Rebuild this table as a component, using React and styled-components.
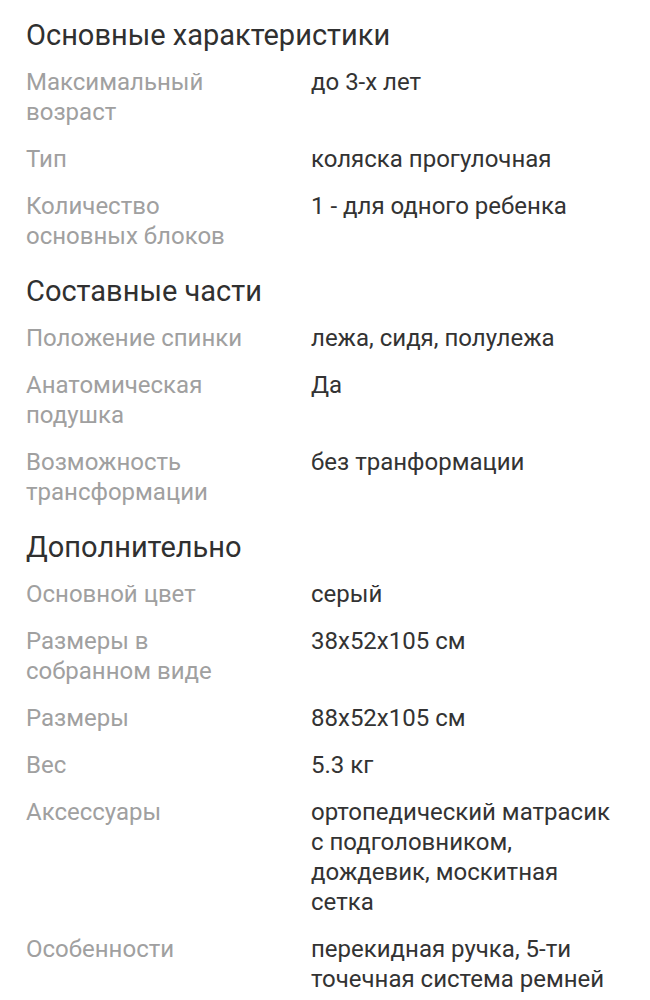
import React from 'react';
import styled, { createGlobalStyle } from 'styled-components';

const GlobalStyle = createGlobalStyle`
  body {
    margin: 0;
    background: #fff;
    font-family: Roboto, "Noto Sans", sans-serif;
  }
`;

const Page = styled.div`
  padding: 20px 26px 0;
`;

const Section = styled.section`
  display: flex;
  flex-direction: column;
  gap: 17px;
  margin-bottom: 25px;
`;

const Title = styled.h2`
  margin: 0;
  font-size: 29px;
  font-weight: 400;
  line-height: 30px;
  color: #303030;
`;

const Row = styled.div`
  display: grid;
  grid-template-columns: 285px 310px;
  font-size: 24px;
  line-height: 30px;
`;

const Label = styled.div`
  color: #a0a0a0;
  padding-right: 40px;
`;

const Value = styled.div`
  color: #333;
`;

const sections = [
  {
    title: 'Основные характеристики',
    rows: [
      ['Максимальный возраст', 'до 3-х лет'],
      ['Тип', 'коляска прогулочная'],
      ['Количество основных блоков', '1 - для одного ребенка'],
    ],
  },
  {
    title: 'Составные части',
    rows: [
      ['Положение спинки', 'лежа, сидя, полулежа'],
      ['Анатомическая подушка', 'Да'],
      ['Возможность трансформации', 'без транформации'],
    ],
  },
  {
    title: 'Дополнительно',
    rows: [
      ['Основной цвет', 'серый'],
      ['Размеры в собранном виде', '38x52x105 см'],
      ['Размеры', '88x52x105 см'],
      ['Вес', '5.3 кг'],
      ['Аксессуары', 'ортопедический матрасик с подголовником, дождевик, москитная сетка'],
      ['Особенности', 'перекидная ручка, 5-ти точечная система ремней'],
    ],
  },
];

export default function App() {
  return (
    <>
      <GlobalStyle />
      <Page>
        {sections.map((s) => (
          <Section key={s.title}>
            <Title>{s.title}</Title>
            {s.rows.map(([k, v]) => (
              <Row key={k}>
                <Label>{k}</Label>
                <Value>{v}</Value>
              </Row>
            ))}
          </Section>
        ))}
      </Page>
    </>
  );
}
